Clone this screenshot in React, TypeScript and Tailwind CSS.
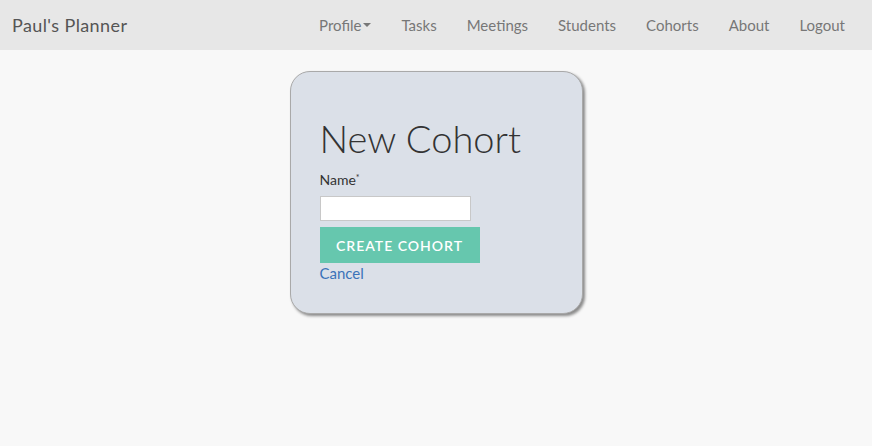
import React from "react";

export default function App() {
  const links = ["Tasks", "Meetings", "Students", "Cohorts", "About", "Logout"];
  return (
    <div
      className="min-h-[446px] w-full bg-[#f8f8f8]"
      style={{ fontFamily: "Lato, 'Open Sans', sans-serif" }}
    >
      <nav className="flex h-[50px] items-center justify-between bg-[#e7e7e7] pl-[12px] pr-[12px]">
        <div className="text-[18px] tracking-[0.4px] text-[#555555]">Paul's Planner</div>
        <ul className="flex items-center text-[15px] text-[#777777]">
          <li className="flex items-center px-[15px]">
            Profile
            <span className="ml-[2px] inline-block h-0 w-0 border-x-[4px] border-t-[4px] border-x-transparent border-t-[#777777]" />
          </li>
          {links.map((l) => (
            <li key={l} className="px-[15px]">
              {l}
            </li>
          ))}
        </ul>
      </nav>
      <div className="flex justify-center pt-[21px]">
        <div className="w-[293px] rounded-[20px] border border-[#a9a9a9] bg-[#dbe0e8] pl-[29px] pr-[20px] pt-[46px] pb-[30px] shadow-[2px_2px_3px_rgba(0,0,0,0.45)]">
          <h1 className="text-[38px] font-light leading-[40px] text-[#333333]">New Cohort</h1>
          <label className="mt-[12px] block text-[14px] font-normal leading-[20px] text-[#333333]">
            Name<span className="relative top-[-4px] text-[9px] leading-none">*</span>
          </label>
          <input
            type="text"
            className="mt-[6px] block h-[25px] w-[151px] border border-[#c8c8c8] bg-white"
          />
          <button className="mt-[6px] block h-[36px] w-[160px] bg-[#66c7ae] text-[14px] font-semibold tracking-[1px] text-white">
            CREATE COHORT
          </button>
          <a className="block text-[15px] leading-[20px] text-[#3b73b9]" href="#">
            Cancel
          </a>
        </div>
      </div>
    </div>
  );
}
